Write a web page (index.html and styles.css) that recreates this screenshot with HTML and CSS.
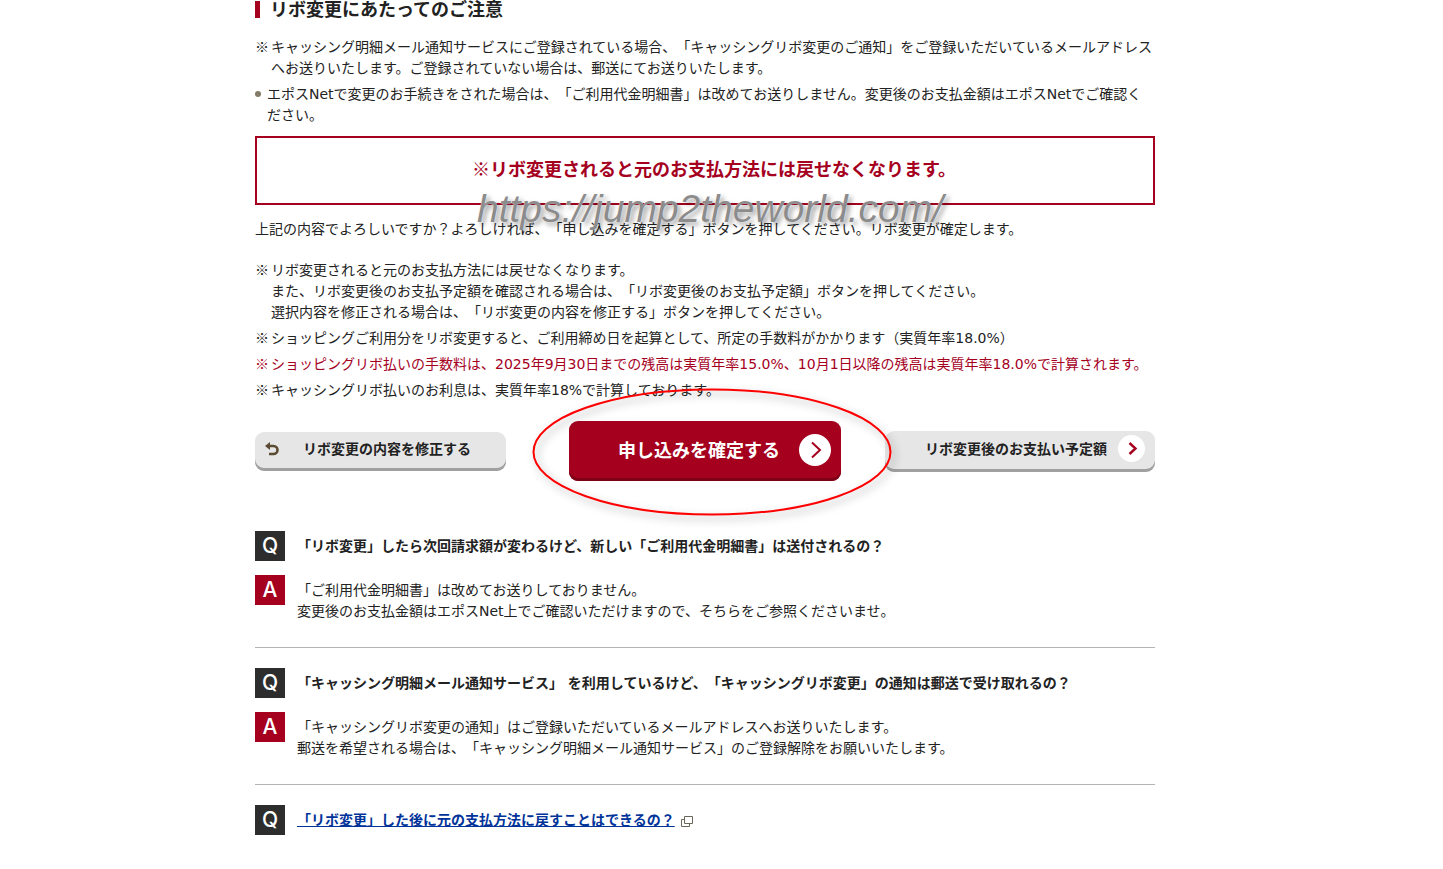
FILE: index.html
```html
<!DOCTYPE html>
<html lang="ja">
<head>
  <meta charset="utf-8">
  <link rel="stylesheet" href="styles.css">
  <title>リボ変更にあたってのご注意</title>
</head>

<body>
  <main class="contents">
    <h2 class="heading">リボ変更にあたってのご注意</h2>

    <ul class="notes">
      <li class="note">キャッシング明細メール通知サービスにご登録されている場合、「キャッシングリボ変更のご通知」をご登録いただいているメールアドレスへお送りいたします。ご登録されていない場合は、郵送にてお送りいたします。</li>
      <li class="dot">エポスNetで変更のお手続きをされた場合は、「ご利用代金明細書」は改めてお送りしません。変更後のお支払金額はエポスNetでご確認く<br>ださい。</li>
    </ul>

    <div class="warning">
      <p>※リボ変更されると元のお支払方法には戻せなくなります。</p>
      <span class="watermark">https://jump2theworld.com/</span>
    </div>

    <p class="confirm">上記の内容でよろしいですか？よろしければ、「申し込みを確定する」ボタンを押してください。リボ変更が確定します。</p>

    <ul class="notes">
      <li class="note">リボ変更されると元のお支払方法には戻せなくなります。<br>
        また、リボ変更後のお支払予定額を確認される場合は、「リボ変更後のお支払予定額」ボタンを押してください。<br>
        選択内容を修正される場合は、「リボ変更の内容を修正する」ボタンを押してください。</li>
      <li class="note">ショッピングご利用分をリボ変更すると、ご利用締め日を起算として、所定の手数料がかかります（実質年率18.0%）</li>
      <li class="note red">ショッピングリボ払いの手数料は、2025年9月30日までの残高は実質年率15.0%、10月1日以降の残高は実質年率18.0%で計算されます。</li>
      <li class="note">キャッシングリボ払いのお利息は、実質年率18%で計算しております。</li>
    </ul>

    <div class="actions">
      <button type="button" class="btn back">
        <svg width="14" height="14" viewBox="0 0 14 14"><path d="M5 0v8L0 4z" fill="#5a4a32"/><path d="M4 4h4.500a3.900 3.900 0 0 1 0 8H4" fill="none" stroke="#5a4a32" stroke-width="2.600"/></svg>
        <span>リボ変更の内容を修正する</span>
      </button>
      <button type="submit" class="btn submit">
        <span>申し込みを確定する</span>
        <svg width="32" height="32" viewBox="0 0 32 32"><circle cx="16" cy="16" r="16" fill="#fff"/><path d="M13 8.500l8 7.500-8 7.500" fill="none" stroke="#a5001e" stroke-width="2"/></svg>
      </button>
      <button type="button" class="btn next">
        <span>リボ変更後のお支払い予定額</span>
        <svg width="27" height="27" viewBox="0 0 27 27"><circle cx="13.500" cy="13.500" r="13.500" fill="#fff"/><path d="M11.500 8l6 5.500-6 5.500" fill="none" stroke="#a5001e" stroke-width="2.400"/></svg>
      </button>
      <svg class="marker" width="360" height="128" viewBox="0 0 360 128"><ellipse cx="180" cy="64" rx="178.500" ry="62.500" fill="none" stroke="#f00" stroke-width="2"/></svg>
    </div>

    <dl class="faq">
      <dt><span class="icon">Q</span><span class="text">「リボ変更」したら次回請求額が変わるけど、新しい「ご利用代金明細書」は送付されるの？</span></dt>
      <dd><span class="icon">A</span><span class="text">「ご利用代金明細書」は改めてお送りしておりません。<br>変更後のお支払金額はエポスNet上でご確認いただけますので、そちらをご参照くださいませ。</span></dd>
    </dl>
    <dl class="faq">
      <dt><span class="icon">Q</span><span class="text">「キャッシング明細メール通知サービス」 を利用しているけど、「キャッシングリボ変更」の通知は郵送で受け取れるの？</span></dt>
      <dd><span class="icon">A</span><span class="text">「キャッシングリボ変更の通知」はご登録いただいているメールアドレスへお送りいたします。<br>郵送を希望される場合は、「キャッシング明細メール通知サービス」のご登録解除をお願いいたします。</span></dd>
    </dl>
    <dl class="faq">
      <dt><span class="icon">Q</span><span class="text"><a href="#">「リボ変更」した後に元の支払方法に戻すことはできるの？</a><svg class="blank" width="12" height="11" viewBox="0 0 12 11"><path d="M3.500.500h8v7h-8z M3.500 3.500h-3v7h8v-3" fill="none" stroke="#6b675a"/></svg></span></dt>
    </dl>
  </main>
</body>
</html>
```
FILE: styles.css
```css
body {
  margin: 0;
  padding-right: 33px;
  background-color: #fff;
  color: #222;
  font-family: "DejaVu Sans", "Noto Sans CJK JP", sans-serif;
  font-size: 14px;
  line-height: 21px;
  text-spacing-trim: space-all;
}
h2, p, ul, dl, dd {
  margin: 0;
  padding: 0;
}
.contents {
  max-width: 900px;
  margin: 0 auto;
}
.heading {
  margin-top: 1px;
  padding-left: 10px;
  border-left: 5px solid #a5001e;
  font-size: 18px;
  line-height: 17px;
}
.notes {
  margin-top: 19px;
  list-style: none;
}
.notes li {
  position: relative;
  margin-bottom: 5px;
}
.note {
  padding-left: 16px;
}
.dot {
  padding-left: 12px;
}
.note::before {
  content: "※";
  position: absolute;
  left: 0;
  top: -1px;
  font-family: "Noto Sans CJK JP", sans-serif;
}
.dot::before {
  content: "";
  position: absolute;
  left: 0;
  top: 7px;
  width: 6px;
  height: 6px;
  border-radius: 50%;
  background-color: #857a68;
}
.red {
  color: #a5001e;
}
.warning {
  position: relative;
  margin-top: 10px;
  padding: 18px 0 22px 18px;
  border: 2px solid #a5001e;
  color: #a5001e;
  font-family: "Noto Sans CJK JP", sans-serif;
  font-size: 18px;
  font-weight: bold;
  line-height: 25px;
  text-align: center;
}
/* site name laid over the notice */
.watermark {
  position: absolute;
  left: 220px;
  top: 49px;
  color: #8c8c8c;
  font: italic 39px/44px "Liberation Sans", sans-serif;
  text-shadow: 0 0 1px #fff, 3px 3px 5px rgba(0,0,0,.4);
}
.confirm {
  margin: 14px 0 20px;
}
.actions {
  position: relative;
  display: grid;
  grid-template-columns: 1fr auto 1fr;
  align-items: center;
  margin: 20px 0 50px;
}
.btn {
  display: flex;
  align-items: center;
  border: none;
  border-radius: 9px;
  background-color: #e6e6e6;
  box-shadow: inset 0 -3px 0 #a0a0a0;
  color: #222;
  font: bold 14px/21px "Noto Sans CJK JP", sans-serif;
  text-spacing-trim: space-all;
}
.back {
  gap: 24px;
  width: 251px;
  height: 39px;
  padding: 0 10px 5px;
}
.submit {
  justify-content: flex-end;
  gap: 19px;
  width: 272px;
  height: 60px;
  padding: 0 10px 3px;
  background-color: #a5001e;
  box-shadow: inset 0 -3px 0 #7d0017;
  color: #fff;
  font-size: 18px;
}
.next {
  justify-self: end;
  justify-content: flex-end;
  gap: 11px;
  width: 270px;
  height: 41px;
  padding: 0 10px 5px;
}
/* hand drawn ring round the submit button */
.marker {
  position: absolute;
  left: 277px;
  top: -33px;
  overflow: visible;
  pointer-events: none;
  filter: drop-shadow(3px 4px 4px rgba(0,0,0,.35));
}
.faq {
  margin-bottom: 20px;
  border-bottom: 1px solid #b4b4b4;
}
.faq:last-child {
  border-bottom: none;
}
.faq dt, .faq dd {
  display: flex;
  gap: 12px;
}
.faq dt {
  font-weight: bold;
}
.faq dd {
  margin-top: 14px;
  padding-bottom: 25px;
}
.faq .text {
  padding-top: 5px;
}
.icon {
  flex: none;
  width: 30px;
  height: 30px;
  background-color: #2d2d2d;
  color: #fff;
  font: 500 21px/30px Inter, sans-serif;
  text-align: center;
}
dd .icon {
  background-color: #a5001e;
}
a {
  color: #003399;
  text-decoration: underline;
}
.blank {
  margin-left: 6px;
  vertical-align: -2px;
}
```
